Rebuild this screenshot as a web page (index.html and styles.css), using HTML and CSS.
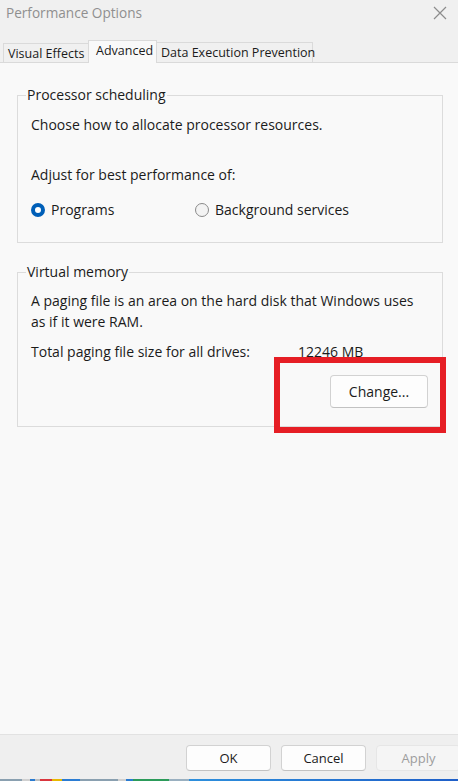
FILE: index.html
```html
<!DOCTYPE html>
<html>
<head>
<meta charset="utf-8">
<link rel="stylesheet" href="styles.css">
</head>
<body>
<div class="window">
  <div class="titlebar">
    <span class="title">Performance Options</span>
    <svg class="close" width="14" height="14" viewBox="0 0 14 14"><path d="M1 1L13 13M13 1L1 13" stroke="#8c8c8c" stroke-width="1.2" fill="none"/></svg>
  </div>
  <div class="tabs">
    <div class="tab t1">Visual Effects</div>
    <div class="tab active">Advanced</div>
    <div class="tab t3">Data Execution Prevention</div>
  </div>
  <div class="panel">
    <fieldset class="group group-proc">
      <legend>Processor scheduling</legend>
      <p class="line l-choose">Choose how to allocate processor resources.</p>
      <p class="line l-adjust">Adjust for best performance of:</p>
      <div class="radios">
        <label class="radio r1"><span class="dot on"></span>Programs</label>
        <label class="radio"><span class="dot"></span>Background services</label>
      </div>
    </fieldset>
    <fieldset class="group group-vm">
      <legend>Virtual memory</legend>
      <p class="line l-para">A paging file is an area on the hard disk that Windows uses as if it were RAM.</p>
      <div class="total"><span class="tlabel">Total paging file size for all drives:</span><span>12246 MB</span></div>
      <div class="btnrow"><button class="btn change">Change...</button></div>
    </fieldset>
    <div class="highlight"></div>
  </div>
  <div class="footer">
    <button class="btn">OK</button>
    <button class="btn">Cancel</button>
    <button class="btn disabled">Apply</button>
  </div>
  <div class="taskbar">
    <span style="width:22px;background:#8aa0b0"></span>
    <span style="width:8px;background:#d0d0d0"></span>
    <span style="width:5px;background:#2a7bd0"></span>
    <span style="width:5px;background:#c0c0c0"></span>
    <span style="width:12px;background:#d9363e"></span>
    <span style="width:10px;background:#e8b800"></span>
    <span style="width:18px;background:#2b7cd3"></span>
    <span style="width:38px;background:#8aa0b0"></span>
    <span style="width:8px;background:#d0d0d0"></span>
    <span style="width:7px;background:#2a7bd0"></span>
    <span style="width:36px;background:#2c9b5a"></span>
    <span style="width:20px;background:#9ab0c0"></span>
    <span style="flex:1;background:linear-gradient(90deg,#2d8fdc,#1f5fc8)"></span>
  </div>
</div>
</body>
</html>
```
FILE: styles.css
```css
html, body {
  margin: 0;
  padding: 0;
}
body {
  width: 458px;
  height: 781px;
  overflow: hidden;
  font-family: "Open Sans", "Noto Sans", sans-serif;
  color: #1b1b1b;
  background: #f0f0f0;
}
.window {
  display: flex;
  flex-direction: column;
  height: 781px;
  position: relative;
}
.titlebar {
  height: 40px;
  display: flex;
  justify-content: space-between;
  align-items: flex-start;
  background: #f0f0f0;
}
.title {
  margin: 3px 0 0 6px;
  font-size: 13.6px;
  color: #8f8f8f;
}
.close {
  margin: 6px 11px 0 0;
}
.tabs {
  display: flex;
  align-items: flex-end;
  height: 22px;
  padding-left: 3px;
  border-bottom: 1px solid #dadada;
  font-size: 12.5px;
}
.tab {
  box-sizing: border-box;
  height: 20px;
  line-height: 19px;
  padding: 0 4px;
  border: 1px solid #dadada;
  border-bottom: none;
  background: #f0f0f0;
  color: #1b1b1b;
  white-space: nowrap;
}
.t1 {
  width: 85px;
  height: 19px;
  border-right: none;
}
.t3 {
  width: 156px;
  border-left: none;
}
.tab.active {
  width: 69px;
  height: 23px;
  line-height: 20px;
  background: #f9f9f9;
  margin-bottom: -1px;
  padding: 0 6px 0 7px;
  border-right: 1px solid #dadada;
}
.panel {
  flex: 1;
  background: #f9f9f9;
  position: relative;
  padding: 22px 15px 0 17px;
  font-size: 14px;
}
.group {
  margin: 0;
  padding: 0 0 0 13px;
  border: 1px solid #dcdcdc;
  min-width: 0;
}
.group legend {
  padding: 0 1px;
  margin-left: -5px;
  font-size: 14px;
  line-height: 20px;
}
.line {
  margin: 0;
  line-height: 20px;
}
.group-proc {
  padding-bottom: 22px;
}
.l-choose {
  margin-top: 10px;
}
.l-adjust {
  margin-top: 30px;
}
.radios {
  display: flex;
  margin-top: 15px;
  line-height: 20px;
}
.radio {
  display: flex;
  align-items: center;
  gap: 6px;
}
.r1 {
  width: 164px;
}
.dot {
  width: 14px;
  height: 14px;
  border-radius: 50%;
  box-sizing: border-box;
  border: 1px solid #8a8a8a;
  background: #f3f3f3;
}
.dot.on {
  border: 4px solid #005fb8;
  background: #ffffff;
}
.group-vm {
  margin-top: 19px;
  padding-bottom: 18px;
}
.l-para {
  margin-top: 8px;
  padding-right: 22px;
  line-height: 21px;
}
.total {
  margin-top: 10px;
  display: flex;
  line-height: 20px;
}
.tlabel {
  width: 267px;
}
.btnrow {
  display: flex;
  justify-content: flex-end;
  padding-right: 14px;
  margin-top: 13px;
}
.btn {
  font-family: inherit;
  font-size: 14px;
  color: #1b1b1b;
  background: #fdfdfd;
  border: 1px solid #d2d2d2;
  border-bottom-color: #c2c2c2;
  border-radius: 4px;
  height: 33px;
  padding: 0;
}
.change {
  width: 98px;
}
.highlight {
  position: absolute;
  left: 274px;
  top: 294px;
  width: 160px;
  height: 64px;
  border: 6px solid #e61e25;
}
.footer {
  height: 45px;
  border-top: 1px solid #e2e2e2;
  background: #efefef;
  display: flex;
  align-items: flex-start;
  padding: 10px 0 0 186px;
  gap: 10px;
  box-sizing: border-box;
}
.footer .btn {
  width: 85px;
  height: 26px;
  flex-shrink: 0;
  font-size: 13px;
}
.footer .btn.disabled {
  color: #9d9d9d;
  background: #f5f5f5;
  border-color: #e6e6e6;
}
.taskbar {
  height: 2px;
  display: flex;
}
.taskbar span {
  display: block;
  height: 2px;
}
```
